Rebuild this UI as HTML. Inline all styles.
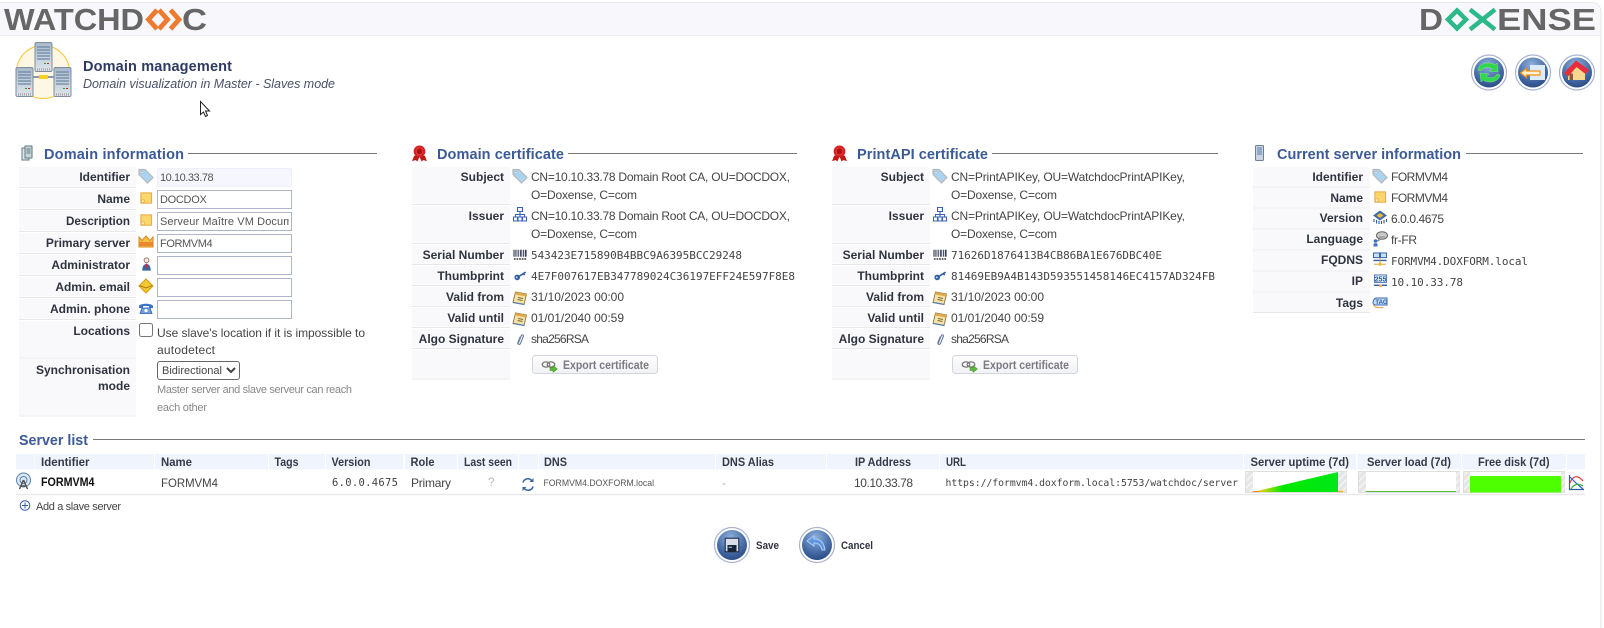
<!DOCTYPE html>
<html lang="en"><head><meta charset="utf-8"><title>Domain management</title>
<style>
html,body{margin:0;padding:0;background:#fff;width:1604px;height:628px;overflow:hidden}
body{position:relative;font-family:"Liberation Sans",Arial,sans-serif}
svg#p{position:absolute;left:0;top:0}
svg text{font-family:"Liberation Sans",Arial,sans-serif;font-size:12px;fill:#444}
svg .l{font-weight:bold;text-anchor:end;fill:#2f3340}
svg .h{font-weight:bold;font-size:14.5px;fill:#3c5a96}
svg .m{font-family:"DejaVu Sans Mono","Liberation Mono",monospace;font-size:11px;fill:#444}
svg .th{font-weight:bold;fill:#333a48;font-size:11.5px}
input.f{position:absolute;box-sizing:border-box;left:157px;width:135px;height:19px;border:1px solid #b0b4c8;background:#fff;font:11px "Liberation Sans",sans-serif;color:#555;padding:0 2px;margin:0;outline:0;border-radius:0}
input.ro{border:1px solid #eeeefc;background:#f6f6ff;border-radius:2px}
input.c{position:absolute;left:139px;top:323px;width:14px;height:14px;margin:0}
select{position:absolute;left:157px;top:361px;width:83px;height:19px;font:11px "Liberation Sans",sans-serif;color:#444;padding:0;margin:0;background:#fff;border:1px solid #666;border-radius:3px}
</style></head><body>
<svg id="p" width="1604" height="628" viewBox="0 0 1604 628" xmlns="http://www.w3.org/2000/svg">
<defs>
<radialGradient id="rb" cx=".45" cy=".25" r=".85"><stop offset="0" stop-color="#8fb0dc"/><stop offset=".55" stop-color="#4a6fa8"/><stop offset="1" stop-color="#1f3f7c"/></radialGradient>
<linearGradient id="up" x1="0" x2="1" y1="0" y2="0"><stop offset="0" stop-color="#f5a000"/><stop offset=".12" stop-color="#c8d800"/><stop offset=".35" stop-color="#00e800"/><stop offset="1" stop-color="#00e818"/></linearGradient>
<linearGradient id="srv" x1="0" x2="0" y1="0" y2="1"><stop offset="0" stop-color="#a9b9c9"/><stop offset="1" stop-color="#dfe6ec"/></linearGradient>
<linearGradient id="btn" x1="0" x2="0" y1="0" y2="1"><stop offset="0" stop-color="#fefefe"/><stop offset="1" stop-color="#f1f2f6"/></linearGradient>
<pattern id="ht" width="5" height="5" patternUnits="userSpaceOnUse" patternTransform="rotate(45)"><rect width="5" height="5" fill="#e6e6e6"/><rect width="1" height="5" fill="#fafafa"/></pattern>
<symbol id="tag" viewBox="0 0 16 16"><path d="M1 1.500h6l8 8-5.500 5.500-8.500-8.500z" fill="#a9d4f2" stroke="#b8b8b8" stroke-width="1.200"/><circle cx="4" cy="4.500" r="1.100" fill="#fff" stroke="#999" stroke-width=".5"/></symbol>
<symbol id="note" viewBox="0 0 16 16"><rect x="2" y="2" width="11.500" height="11" fill="#fbd66a" stroke="#e9a33a"/><path d="M2.500 12.500v-3h3v3z" fill="#fff4cc" stroke="#e9a33a" stroke-width=".7"/></symbol>
<symbol id="crown" viewBox="0 0 16 16"><path d="M1 3l3 3.500L8 2l4 4.500L15 3v10H1z" fill="#f6c040" stroke="#d8851f"/><path d="M1.500 9h13M1.500 11h13" stroke="#d9501f"/></symbol>
<symbol id="user" viewBox="0 0 16 16"><circle cx="8" cy="4" r="2.600" fill="#f4e6e0" stroke="#8a5a50" stroke-width=".8"/><path d="M3.500 15c0-5 2-7 4.500-7s4.500 2 4.500 7z" fill="#38689c"/><path d="M7.300 7.500h1.400l.3 5h-2z" fill="#c92f2f"/></symbol>
<symbol id="mail" viewBox="0 0 16 16"><path d="M8 1l7 7-7 7-7-7z" fill="#f6c92f" stroke="#cf9a16"/><path d="M1.500 7.500L8 10l6.500-2.500" fill="none" stroke="#b07a10"/></symbol>
<symbol id="phone" viewBox="0 0 16 16"><path d="M1 6c1-3 13-3 14 0v2h-4V6H5v2H1z" fill="#3a72c8"/><path d="M4 8h8l2 5.500H2z" fill="#6ea0e2" stroke="#2a5cae" stroke-width=".8"/><circle cx="8" cy="10.500" r="1.600" fill="#fff"/></symbol>
<symbol id="net" viewBox="0 0 16 16"><path d="M5.500 1h5v4h-5zM1.500 10.500h4v4h-4zM6 10.500h4v4H6zM10.500 10.500h4v4h-4zM8 5v5.500M3.500 10.500V8h9v2.500" fill="none" stroke="#3a62b0" stroke-width="1.100"/></symbol>
<symbol id="bar" viewBox="0 0 16 16"><path d="M1 2v8M2.500 2v8M4.500 2v8M6.500 2v8M8.500 2v8M10 2v8M12 2v8M14 2v8M15 2v8" stroke="#333b52" stroke-width="1"/><path d="M1 12.500h14" stroke="#555" stroke-width="2" stroke-dasharray="2 1"/></symbol>
<symbol id="key" viewBox="0 0 16 16"><circle cx="4.500" cy="10" r="3" fill="#2f5ea8"/><circle cx="4" cy="10" r="1" fill="#cfe0f5"/><path d="M7 8.500L13.500 4.500M11 6l1.500 1.500" stroke="#3a5f9e" stroke-width="1.800" fill="none"/></symbol>
<symbol id="cal" viewBox="0 0 16 16"><path d="M3.500 2l11 2-2.500 10.500-11-2z" fill="#f6e3a6" stroke="#8a7440" stroke-width=".9"/><path d="M3.500 2l11 2-.7 2.500-11-2z" fill="#e0a94a"/><path d="M6 7.500l5 1M5.500 9.500l5 1" stroke="#7a6a3a" stroke-width=".9"/><path d="M1.500 12.500l11 2" stroke="#5a7fb0" stroke-width="1.200"/></symbol>
<symbol id="clip" viewBox="0 0 16 16"><path d="M6 12.500l3.500-9c.6-1.500 3-.8 2.400.8l-3.300 8.200c-.8 2-3.800 1-3-1l2.800-7" fill="none" stroke="#6a7fa4" stroke-width="1.300"/></symbol>
<symbol id="chip" viewBox="0 0 16 16"><path d="M2 10v3M4.500 11v3.500M7 12v3M9.500 12v3M12 11v3.500M14.500 10v3" stroke="#345b96" stroke-width="1.100"/><path d="M8 1.500l7 5-7 5-7-5z" fill="#3e6aa8"/><path d="M8 4l3.500 2.500L8 9 4.500 6.500z" fill="#f2b93a"/></symbol>
<symbol id="lang" viewBox="0 0 16 16"><ellipse cx="10" cy="4.500" rx="5.500" ry="3.800" fill="#c9c9c9" stroke="#666"/><path d="M7 8l-2 2.500 3.500-2" fill="#c9c9c9" stroke="#666" stroke-width=".6"/><path d="M7 6h6" stroke="#888"/><circle cx="3.500" cy="10" r="1.800" fill="#3c70c4"/><path d="M1.500 15.500v-2.500c0-1 4-1 4 0v2.500z" fill="#3c70c4"/></symbol>
<symbol id="fq" viewBox="0 0 16 16"><rect x="1" y="1" width="6.500" height="5" fill="#c8e0f4" stroke="#2f5ea8"/><rect x="8.500" y="1" width="6.500" height="5" fill="#c8e0f4" stroke="#2f5ea8"/><path d="M1 9h14" stroke="#2f5ea8" stroke-width="1.500"/><path d="M8 6v6M1.500 13h13" stroke="#d09a28"/><rect x="6.500" y="11.500" width="3" height="3" fill="#f0b93a"/></symbol>
<symbol id="ip" viewBox="0 0 16 16"><rect x="1.500" y="1" width="13" height="8" fill="#e5eefb" stroke="#4a73b8"/><text x="8" y="8" text-anchor="middle" style="font-size:7.500px;font-weight:bold;fill:#2f5ea8">255</text><path d="M1 12h14" stroke="#2f5ea8" stroke-width="1.500"/><rect x="6.500" y="11" width="3" height="3" fill="#f0b93a"/></symbol>
<symbol id="tg" viewBox="0 0 16 16"><path d="M1 8c0-3 1.500-5 3.500-5H15v7H4.500C2.500 10 1 9.500 1 8z" fill="#c8dcf6" stroke="#3a6ab4"/><text x="9.500" y="9" text-anchor="middle" style="font-size:6px;font-weight:bold;fill:#2f5ea8">TAG</text><path d="M1.500 9.500c1 3.500 5 3.500 10 3" fill="none" stroke="#f09a30"/></symbol>
<symbol id="ribbon" viewBox="0 0 16 16"><path d="M3 10L1 15l3.500-.8L6 15.500 8 11l2 4.500 1.500-1.300L15 15l-2-5z" fill="#c01818"/><circle cx="8" cy="6" r="5.500" fill="#d81f1f"/><circle cx="8" cy="6" r="3.200" fill="#b01010" stroke="#f05050" stroke-width=".6"/></symbol>
<symbol id="save" viewBox="0 0 16 16"><rect x="2" y="2" width="12" height="12" fill="#d8dfe9" stroke="#22304c"/><rect x="4" y="8" width="8" height="6" fill="#182338"/><rect x="5" y="9.500" width="3" height="1" fill="#8fc4f0"/></symbol>
</defs>

<!-- header -->
<path d="M0 2.500H1592a9 9 0 0 1 9 9V628" fill="none" stroke="#e6e6ea" stroke-width="1"/>
<path d="M0 3H1592a8 8 0 0 1 8 8V35H0z" fill="#f8f8fc"/>
<path d="M0 35.500H1600" stroke="#eeeef2"/>
<text x="4" y="30" textLength="140" lengthAdjust="spacingAndGlyphs" style="font-size:30.500px;font-weight:bold;fill:#666">WATCHD</text>
<path d="M157 10L148.500 19.500 157 29M159 10L167.500 19.500 159 29" fill="none" stroke="#ee7a30" stroke-width="4.800"/>
<path d="M170.500 10L179 19.500 170.500 29" fill="none" stroke="#ee7a30" stroke-width="4.800"/>
<text x="182" y="30" textLength="25" lengthAdjust="spacingAndGlyphs" style="font-size:30.500px;font-weight:bold;fill:#666">C</text>
<text x="1419" y="30" textLength="24" lengthAdjust="spacingAndGlyphs" style="font-size:30.500px;font-weight:bold;fill:#666">D</text>
<path d="M1457 10.500L1448 19.500 1457 28.500 1466 19.500z" fill="none" stroke="#2bb98a" stroke-width="4.500"/>
<path d="M1470 9.500L1495 29.500M1495 9.500L1470 29.500" fill="none" stroke="#2bb98a" stroke-width="4.500"/>
<text x="1497" y="30" textLength="99" lengthAdjust="spacingAndGlyphs" style="font-size:30.500px;font-weight:bold;fill:#666">ENSE</text>

<!-- page icon -->
<circle cx="43" cy="72" r="26.500" fill="#fdf7e4" stroke="#f8cb4a" stroke-width="1.200"/>
<path d="M30 77h28" stroke="#8a98a6" stroke-width="2"/>
<rect x="39" y="75" width="9" height="4" fill="#f8d020"/>
<g id="srvA">
<rect x="35" y="42.500" width="17" height="29" rx="1.500" fill="url(#srv)" stroke="#7f8e9e"/>
<path d="M37 47h13M37 50h13M37 53h13M37 56h13M37 59h13" stroke="#6d88a8" stroke-width="1.200"/>
<path d="M37 69.500h13" stroke="#aaa" stroke-width="2.500" stroke-dasharray="1 1"/>
<path d="M44 63.500h2" stroke="#2ba02b"/><path d="M47 63.500h2" stroke="#d02020"/>
</g>
<use href="#srvA" x="-19" y="25"/><use href="#srvA" x="19" y="25"/>

<text x="83" y="71" textLength="149" style="font-size:14.500px;font-weight:bold;fill:#2e3a60">Domain management</text>
<text x="83" y="88" textLength="252" style="font-style:italic;font-size:12.500px;fill:#4a5068">Domain visualization in Master - Slaves mode</text>

<!-- cursor -->
<path d="M200.500 101.500v13l3-2.500 2 4.500 2-1-2-4.500h4z" fill="#fff" stroke="#222" stroke-width="1"/>

<!-- round buttons -->
<g fill="#fff" stroke="#a6b2d0" stroke-width="1.200"><circle cx="1489" cy="72.500" r="17.500"/><circle cx="1533" cy="72.500" r="17.500"/><circle cx="1577" cy="72.500" r="17.500"/></g>
<g fill="url(#rb)"><circle cx="1489" cy="72.500" r="15"/><circle cx="1533" cy="72.500" r="15"/><circle cx="1577" cy="72.500" r="15"/></g>
<path d="M1478 70c1-7 11-9 17-5l2-2 1 9-9-1 3-2c-3-3-9-2-11 2zM1500 75c-1 7-11 9-17 5l-2 2-1-9 9 1-3 2c3 3 9 2 11-2z" fill="#2fd84a" stroke="#9fe8a8" stroke-width=".4"/>
<rect x="1530" y="65" width="15" height="15" fill="#dcebf8"/>
<path d="M1520.500 73l6-4.500v2.500h13.500v4h-13.500v2.500z" fill="#fff3d0" stroke="#f09018" stroke-width="1.200"/>
<path d="M1568 72l8.500-7.500 8.500 6V80h-17z" fill="#f6d890"/><path d="M1564 73L1576 60.500 1589 70 1585.500 74 1576.500 67 1568 76.500z" fill="#e82c3c"/><rect x="1569.500" y="73.500" width="3.500" height="6.500" fill="#8a5a48"/>

<!-- section headers -->
<g stroke="#777" stroke-width="1"><path d="M188 153.500H377M568 153.500H797M992 153.500H1218M1466 153.500H1583M93 439.500H1585"/></g>
<text class="h" x="44" y="159" textLength="140">Domain information</text>
<text class="h" x="437" y="159" textLength="127">Domain certificate</text>
<text class="h" x="857" y="159" textLength="131">PrintAPI certificate</text>
<text class="h" x="1277" y="159" textLength="184">Current server information</text>
<text class="h" x="19" y="445" textLength="69" lengthAdjust="spacingAndGlyphs">Server list</text>

<path d="M22 148h7v12h-7z" fill="#dfe8e8" stroke="#5d7a80"/><path d="M25 146h7v12h-7z" fill="#c8d6da" stroke="#5d7a80"/><path d="M26.500 149h4M26.500 151h4M26.500 153h4" stroke="#5d7a80"/>
<use href="#ribbon" x="411" y="145" width="17" height="17"/>
<use href="#ribbon" x="831" y="145" width="17" height="17"/>
<rect x="1255.500" y="145.500" width="8" height="15" rx="1" fill="#c9d5e2" stroke="#6d7f90"/><path d="M1257 148h5M1257 150h5M1257 152h5M1257 154h5" stroke="#5a7fa8"/>

<!-- left table backgrounds -->
<g fill="#f9f9fb">
<rect x="19" y="167" width="117" height="19.500"/><rect x="19" y="189" width="117" height="19.500"/><rect x="19" y="211" width="117" height="19.500"/><rect x="19" y="233" width="117" height="19.500"/><rect x="19" y="255" width="117" height="19.500"/><rect x="19" y="277" width="117" height="19.500"/><rect x="19" y="299" width="117" height="19.500"/><rect x="19" y="321" width="117" height="36"/><rect x="19" y="359" width="117" height="56"/>
<rect x="412" y="167" width="98" height="36.500"/><rect x="412" y="206" width="98" height="36.500"/><rect x="412" y="245" width="98" height="18.500"/><rect x="412" y="266" width="98" height="18.500"/><rect x="412" y="287" width="98" height="18.500"/><rect x="412" y="308" width="98" height="18.500"/><rect x="412" y="329" width="98" height="18.500"/><rect x="412" y="350" width="98" height="28"/>
<rect x="832" y="167" width="98" height="36.500"/><rect x="832" y="206" width="98" height="36.500"/><rect x="832" y="245" width="98" height="18.500"/><rect x="832" y="266" width="98" height="18.500"/><rect x="832" y="287" width="98" height="18.500"/><rect x="832" y="308" width="98" height="18.500"/><rect x="832" y="329" width="98" height="18.500"/><rect x="832" y="350" width="98" height="28"/>
<rect x="1253" y="167" width="117" height="19"/><rect x="1253" y="188" width="117" height="19"/><rect x="1253" y="209" width="117" height="19"/><rect x="1253" y="230" width="117" height="19"/><rect x="1253" y="251" width="117" height="19"/><rect x="1253" y="272" width="117" height="19"/><rect x="1253" y="293" width="117" height="19"/>
</g>
<path fill="none" stroke="#e8e8ea" stroke-width="1" d="M19 187.500h117M19 209.500h117M19 231.500h117M19 253.500h117M19 275.500h117M19 297.500h117M19 319.500h117M19 358h117M19 416h117
M412 204.500h98M412 243.500h98M412 264.500h98M412 285.500h98M412 306.500h98M412 327.500h98M412 348.500h98M412 379h98
M832 204.500h98M832 243.500h98M832 264.500h98M832 285.500h98M832 306.500h98M832 327.500h98M832 348.500h98M832 379h98
M1253 187h117M1253 208h117M1253 229h117M1253 250h117M1253 271h117M1253 292h117M1253 312.500h117"/>

<!-- left labels -->
<text class="l" x="130" y="181">Identifier</text>
<text class="l" x="130" y="203">Name</text>
<text class="l" x="130" y="225" textLength="64" lengthAdjust="spacingAndGlyphs">Description</text>
<text class="l" x="130" y="247">Primary server</text>
<text class="l" x="130" y="269">Administrator</text>
<text class="l" x="130" y="291">Admin. email</text>
<text class="l" x="130" y="313">Admin. phone</text>
<text class="l" x="130" y="335">Locations</text>
<text class="l" x="130" y="374">Synchronisation</text>
<text class="l" x="130" y="390">mode</text>
<use href="#tag" x="138" y="168" width="16" height="16"/>
<use href="#note" x="139" y="191" width="15" height="15"/>
<use href="#note" x="139" y="213" width="15" height="15"/>
<use href="#crown" x="138" y="234" width="16" height="16"/>
<use href="#user" x="139" y="256" width="15" height="16"/>
<use href="#mail" x="138" y="278" width="16" height="16"/>
<use href="#phone" x="138" y="300" width="16" height="16"/>
<text x="157" y="337" textLength="208">Use slave's location if it is impossible to</text>
<text x="157" y="354" textLength="58">autodetect</text>
<text x="157" y="393" textLength="195" style="fill:#888;font-size:11px">Master server and slave serveur can reach</text>
<text x="157" y="411" textLength="50" style="fill:#888;font-size:11px">each other</text>

<!-- domain cert -->
<text class="l" x="504" y="181">Subject</text>
<text class="l" x="504" y="220">Issuer</text>
<text class="l" x="504" y="259">Serial Number</text>
<text class="l" x="504" y="280">Thumbprint</text>
<text class="l" x="504" y="301">Valid from</text>
<text class="l" x="504" y="322">Valid until</text>
<text class="l" x="504" y="343">Algo Signature</text>
<use href="#tag" x="512" y="168" width="16" height="16"/><use href="#net" x="512" y="206" width="16" height="17"/><use href="#bar" x="512" y="248" width="16" height="14"/><use href="#key" x="513" y="268" width="15" height="15"/><use href="#cal" x="512" y="290" width="16" height="16"/><use href="#cal" x="512" y="311" width="16" height="16"/><use href="#clip" x="513" y="332" width="14" height="15"/>
<text x="531" y="181" textLength="259">CN=10.10.33.78 Domain Root CA, OU=DOCDOX,</text>
<text x="531" y="199" textLength="106">O=Doxense, C=com</text>
<text x="531" y="220" textLength="259">CN=10.10.33.78 Domain Root CA, OU=DOCDOX,</text>
<text x="531" y="238" textLength="106">O=Doxense, C=com</text>
<text class="m" x="531" y="259" textLength="211">543423E715890B4BBC9A6395BCC29248</text>
<text class="m" x="531" y="280" textLength="264">4E7F007617EB347789024C36197EFF24E597F8E8</text>
<text x="531" y="301" textLength="93">31/10/2023 00:00</text>
<text x="531" y="322" textLength="93">01/01/2040 00:59</text>
<text x="531" y="343" textLength="58">sha256RSA</text>
<rect x="532.500" y="355.500" width="125" height="18" rx="3" fill="url(#btn)" stroke="#d4d6de"/>
<ellipse cx="546" cy="364.500" rx="3.800" ry="2.600" fill="none" stroke="#777" stroke-width="1.300"/><ellipse cx="551" cy="364.500" rx="3.800" ry="2.600" fill="none" stroke="#777" stroke-width="1.300"/><path d="M550 367.500h3v-2l4.500 3.500-4.500 3.500v-2h-3z" fill="#5cb83a" stroke="#3c8a20" stroke-width=".5"/>
<text x="563" y="369" textLength="86" lengthAdjust="spacingAndGlyphs" style="font-weight:bold;fill:#7a7a80;font-size:11.500px">Export certificate</text>

<!-- printapi cert -->
<text class="l" x="924" y="181">Subject</text>
<text class="l" x="924" y="220">Issuer</text>
<text class="l" x="924" y="259">Serial Number</text>
<text class="l" x="924" y="280">Thumbprint</text>
<text class="l" x="924" y="301">Valid from</text>
<text class="l" x="924" y="322">Valid until</text>
<text class="l" x="924" y="343">Algo Signature</text>
<use href="#tag" x="932" y="168" width="16" height="16"/><use href="#net" x="932" y="206" width="16" height="17"/><use href="#bar" x="932" y="248" width="16" height="14"/><use href="#key" x="933" y="268" width="15" height="15"/><use href="#cal" x="932" y="290" width="16" height="16"/><use href="#cal" x="932" y="311" width="16" height="16"/><use href="#clip" x="933" y="332" width="14" height="15"/>
<text x="951" y="181" textLength="234">CN=PrintAPIKey, OU=WatchdocPrintAPIKey,</text>
<text x="951" y="199" textLength="106">O=Doxense, C=com</text>
<text x="951" y="220" textLength="234">CN=PrintAPIKey, OU=WatchdocPrintAPIKey,</text>
<text x="951" y="238" textLength="106">O=Doxense, C=com</text>
<text class="m" x="951" y="259" textLength="211">71626D1876413B4CB86BA1E676DBC40E</text>
<text class="m" x="951" y="280" textLength="264">81469EB9A4B143D593551458146EC4157AD324FB</text>
<text x="951" y="301" textLength="93">31/10/2023 00:00</text>
<text x="951" y="322" textLength="93">01/01/2040 00:59</text>
<text x="951" y="343" textLength="58">sha256RSA</text>
<rect x="952.500" y="355.500" width="125" height="18" rx="3" fill="url(#btn)" stroke="#d4d6de"/>
<ellipse cx="966" cy="364.500" rx="3.800" ry="2.600" fill="none" stroke="#777" stroke-width="1.300"/><ellipse cx="971" cy="364.500" rx="3.800" ry="2.600" fill="none" stroke="#777" stroke-width="1.300"/><path d="M970 367.500h3v-2l4.500 3.500-4.500 3.500v-2h-3z" fill="#5cb83a" stroke="#3c8a20" stroke-width=".5"/>
<text x="983" y="369" textLength="86" lengthAdjust="spacingAndGlyphs" style="font-weight:bold;fill:#7a7a80;font-size:11.500px">Export certificate</text>

<!-- current server -->
<text class="l" x="1363" y="181">Identifier</text>
<text class="l" x="1363" y="202">Name</text>
<text class="l" x="1363" y="222">Version</text>
<text class="l" x="1363" y="243">Language</text>
<text class="l" x="1363" y="264">FQDNS</text>
<text class="l" x="1363" y="285">IP</text>
<text class="l" x="1363" y="307">Tags</text>
<use href="#tag" x="1372" y="168" width="16" height="16"/><use href="#note" x="1373" y="190" width="15" height="15"/><use href="#chip" x="1372" y="209" width="16" height="16"/><use href="#lang" x="1372" y="231" width="16" height="16"/><use href="#fq" x="1372" y="252" width="16" height="15"/><use href="#ip" x="1373" y="274" width="15" height="15"/><use href="#tg" x="1372" y="295" width="16" height="16"/>
<text x="1391" y="181" textLength="57">FORMVM4</text>
<text x="1391" y="202" textLength="57">FORMVM4</text>
<text x="1391" y="223" textLength="53">6.0.0.4675</text>
<text x="1391" y="244" textLength="26">fr-FR</text>
<text class="m" x="1391" y="265" textLength="137">FORMVM4.DOXFORM.local</text>
<text class="m" x="1391" y="286" textLength="72">10.10.33.78</text>

<!-- server list table -->
<g fill="#f0f4fc">
<rect x="16" y="454" width="18.500" height="15.500"/><rect x="35" y="454" width="119" height="15.500"/><rect x="155" y="454" width="113" height="15.500"/><rect x="269" y="454" width="56" height="15.500"/><rect x="326" y="454" width="77.500" height="15.500"/><rect x="405" y="454" width="52" height="15.500"/><rect x="458" y="454" width="60" height="15.500"/><rect x="519" y="454" width="19" height="15.500"/><rect x="539" y="454" width="176" height="15.500"/><rect x="716" y="454" width="110" height="15.500"/><rect x="827" y="454" width="112" height="15.500"/><rect x="940" y="454" width="303" height="15.500"/><rect x="1244" y="454" width="112" height="15.500"/><rect x="1357.500" y="454" width="103.500" height="15.500"/><rect x="1462" y="454" width="104" height="15.500"/><rect x="1567" y="454" width="18" height="15.500"/>
</g>
<path d="M16 494.500H1585" stroke="#e9e9ec" stroke-width="1.500"/>
<text class="th" x="41" y="466" textLength="48.500" lengthAdjust="spacingAndGlyphs">Identifier</text>
<text class="th" x="161" y="466" textLength="31" lengthAdjust="spacingAndGlyphs">Name</text>
<text class="th" x="274.500" y="466" textLength="24" lengthAdjust="spacingAndGlyphs">Tags</text>
<text class="th" x="331.500" y="466" textLength="39" lengthAdjust="spacingAndGlyphs">Version</text>
<text class="th" x="410.500" y="466" textLength="24" lengthAdjust="spacingAndGlyphs">Role</text>
<text class="th" x="464" y="466" textLength="48" lengthAdjust="spacingAndGlyphs">Last seen</text>
<text class="th" x="544" y="466" textLength="23" lengthAdjust="spacingAndGlyphs">DNS</text>
<text class="th" x="722" y="466" textLength="52" lengthAdjust="spacingAndGlyphs">DNS Alias</text>
<text class="th" x="855" y="466" textLength="56" lengthAdjust="spacingAndGlyphs">IP Address</text>
<text class="th" x="946" y="466" textLength="20" lengthAdjust="spacingAndGlyphs">URL</text>
<text class="th" x="1250.500" y="466" textLength="98.500" lengthAdjust="spacingAndGlyphs">Server uptime (7d)</text>
<text class="th" x="1367" y="466" textLength="84" lengthAdjust="spacingAndGlyphs">Server load (7d)</text>
<text class="th" x="1478" y="466" textLength="71.500" lengthAdjust="spacingAndGlyphs">Free disk (7d)</text>

<circle cx="23.500" cy="480" r="7" fill="#dbe8f5" stroke="#5a80b0"/><circle cx="23.500" cy="480" r="3.500" fill="none" stroke="#5a80b0"/><path d="M23.500 480l-4 9M23.500 480l4 9M20.500 486h6" stroke="#555" stroke-width="1.500" fill="none"/>
<text x="41" y="486" textLength="53.500" lengthAdjust="spacingAndGlyphs" style="font-weight:bold;fill:#111;font-size:11.500px">FORMVM4</text>
<text x="161" y="487" textLength="57" lengthAdjust="spacingAndGlyphs">FORMVM4</text>
<text class="m" x="332" y="486" textLength="66" style="font-size:10.500px">6.0.0.4675</text>
<text x="411" y="487" textLength="40">Primary</text>
<text x="488" y="486" style="fill:#bbb">?</text>
<path d="M523 482.500a5 5 0 0 1 9-1.500M533 486.500a5 5 0 0 1-9 1.500" fill="none" stroke="#3a64a0" stroke-width="1.500"/><path d="M533.500 478v4h-4zM522.500 491v-4h4z" fill="#3a64a0"/>
<text x="543.500" y="486" textLength="110.500" lengthAdjust="spacingAndGlyphs" style="font-size:9.500px;fill:#555">FORMVM4.DOXFORM.local</text>
<text x="722" y="487" style="fill:#c9a8a0">-</text>
<text x="854" y="487" textLength="59">10.10.33.78</text>
<text class="m" x="945.500" y="486" textLength="292.500" style="font-size:9.800px">https://formvm4.doxform.local:5753/watchdoc/server</text>

<!-- sparklines -->
<g transform="translate(1 0)">
<rect x="1244.500" y="471.500" width="101" height="21" fill="#fff" stroke="#dedede"/>
<rect x="1245" y="472" width="7" height="20" fill="url(#ht)"/><rect x="1337" y="472" width="8.500" height="20" fill="url(#ht)"/>
<path d="M1252 492L1337 472V492z" fill="url(#up)"/><path d="M1337 491.500h5" stroke="#f5b030" stroke-width="1.500"/><path d="M1252 491.500h6" stroke="#f08010" stroke-width="1"/>
<rect x="1357.500" y="471.500" width="101" height="21" fill="#fff" stroke="#dedede"/>
<rect x="1358" y="472" width="7" height="20" fill="url(#ht)"/><rect x="1455" y="472" width="3.500" height="20" fill="url(#ht)"/>
<path d="M1365 491.500H1455" stroke="#55c040" stroke-width="1"/>
<rect x="1462.500" y="471.500" width="101" height="21" fill="#fff" stroke="#dedede"/>
<rect x="1463" y="472" width="6" height="20" fill="url(#ht)"/><rect x="1560" y="472" width="3.500" height="20" fill="url(#ht)"/>
<rect x="1469" y="476" width="91" height="16.500" fill="#4dff00"/>
<path d="M1568.500 475v14.500H1583" fill="none" stroke="#2f5ea8" stroke-width="1.200"/><path d="M1569 483c3-8 8-8 13-2" fill="none" stroke="#e04040" stroke-width="1.200"/><path d="M1569 477l6 6 7 6" fill="none" stroke="#3060d0" stroke-width="1.200"/><path d="M1570 489c3-5 7-6 12-3" fill="none" stroke="#40b040" stroke-width="1.200"/>
</g>

<circle cx="25" cy="505.500" r="4.800" fill="none" stroke="#3a5fa8"/><path d="M25 502.500v6M22 505.500h6" stroke="#3a5fa8"/>
<text x="36" y="510" textLength="85" style="font-size:11px">Add a slave server</text>

<!-- actions -->
<circle cx="732" cy="545" r="17.500" fill="#fff" stroke="#a6b2d0" stroke-width="1.200"/><circle cx="732" cy="545" r="15" fill="url(#rb)"/>
<use href="#save" x="723" y="536" width="18" height="18"/>
<text x="756" y="549" textLength="23" lengthAdjust="spacingAndGlyphs" style="font-size:11px;font-weight:bold;fill:#2f3340">Save</text>
<circle cx="817" cy="545" r="17.500" fill="#fff" stroke="#a6b2d0" stroke-width="1.200"/><circle cx="817" cy="545" r="15" fill="url(#rb)"/>
<path d="M807 541l7-5v3c6 0 10 3 11 11l-3 0c-1-5-4-7-8-7v3z" fill="#5f95de" stroke="#a8d0f8" stroke-width="1"/>
<text x="841" y="549" textLength="32" lengthAdjust="spacingAndGlyphs" style="font-size:11px;font-weight:bold;fill:#2f3340">Cancel</text>
</svg>

<input class="f ro" style="top:168px;letter-spacing:-.45px" value="10.10.33.78" readonly>
<input class="f" style="top:190px;letter-spacing:-.3px" value="DOCDOX">
<input class="f" style="top:212px;letter-spacing:.1px" value="Serveur Maître VM Documentation">
<input class="f" style="top:234px;letter-spacing:-.4px" value="FORMVM4">
<input class="f" style="top:256px" value="">
<input class="f" style="top:278px" value="">
<input class="f" style="top:300px" value="">
<input class="c" type="checkbox">
<select><option>Bidirectional</option></select>
</body></html>
